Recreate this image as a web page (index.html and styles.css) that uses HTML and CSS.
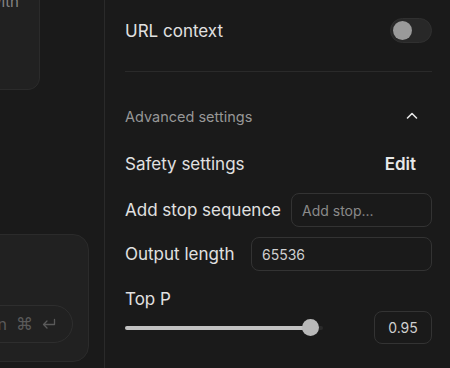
FILE: index.html
```html
<!DOCTYPE html>
<html lang="en">
<head>
  <meta charset="UTF-8" />
  <title>Run settings</title>
  <link rel="stylesheet" href="styles.css">
</head>
<body>

<div class="layout">
  <!-- Chat area (cropped) -->
  <div class="chat">
    <div class="card card-top">
      <div class="card-text">Start typing a prompt, or chat with</div>
    </div>
    <div class="spacer"></div>
    <div class="card card-input">
      <div class="run-pill">
        <span>Run</span>
        <span class="kbd">⌘</span>
        <svg class="enter" width="14" height="12" viewBox="0 0 14 12">
          <path d="M12.5 1.5 V6.5 H1.5 M5 3 L1.5 6.5 L5 10" fill="none" stroke="#5a5a5a" stroke-width="1.3" stroke-linecap="round" stroke-linejoin="round"/>
        </svg>
      </div>
    </div>
  </div>

  <div class="vline"></div>

  <!-- Run settings -->
  <div class="settings">
    <div class="row toggle-row">
      <span class="label">URL context</span>
      <label class="toggle">
        <input type="checkbox">
        <span class="slider"></span>
      </label>
    </div>

    <div class="divider"></div>

    <div class="row adv-header">
      <span class="adv-title">Advanced settings</span>
      <svg class="chevron" width="14" height="14" viewBox="0 0 14 14">
        <path d="M2.5 9 L7 4.5 L11.5 9" fill="none" stroke="#e6e6e6" stroke-width="1.6" stroke-linecap="round" stroke-linejoin="round"/>
      </svg>
    </div>

    <div class="row safety-row">
      <span class="label">Safety settings</span>
      <button class="edit-btn">Edit</button>
    </div>

    <div class="row field-row stop-row">
      <span class="label">Add stop sequence</span>
      <input class="field" type="text" placeholder="Add stop...">
    </div>

    <div class="row field-row output-row">
      <span class="label">Output length</span>
      <input class="field" type="text" value="65536">
    </div>

    <div class="topp-label label">Top P</div>
    <div class="row range-row">
      <div class="range">
        <div class="range-fill" style="width: 93.5%"></div>
        <div class="range-thumb" style="left: 93.5%"></div>
      </div>
      <input class="num-box" type="text" value="0.95">
    </div>
  </div>
</div>

</body>
</html>
```

FILE: styles.css
```css
* { box-sizing: border-box; font-family: 'Inter', 'Noto Sans', sans-serif; }
body {
  margin: 0;
  background: #1a1a1a;
  color: #e3e3e3;
  overflow: hidden;
}

.layout {
  display: flex;
  height: 368px;
}

/* Chat column, cut off by the window */
.chat {
  width: 104px;
  flex-shrink: 0;
  overflow: hidden;
  display: flex;
  flex-direction: column;
}

.card {
  background: #212121;
  border: 1px solid #2b2b2b;
  flex-shrink: 0;
}

.card-top {
  width: 400px;
  height: 150px;
  margin: -60px 0 0 -360px;
  border-radius: 12px;
  padding: 0 20px 77px;
  display: flex;
  align-items: flex-end;
}

.card-text {
  width: 100%;
  text-align: right;
  white-space: nowrap;
  font-size: 15px;
  line-height: 20px;
  color: #858585;
}

.spacer { height: 144px; flex-shrink: 0; }

.card-input {
  width: 289px;
  height: 128px;
  margin-left: -200px;
  border-radius: 16px;
  padding: 0 15px 18px 0;
  display: flex;
  align-items: flex-end;
  justify-content: flex-end;
}

.run-pill {
  height: 38px;
  padding: 0 16px 0 30px;
  border: 1px solid #2e2e2e;
  border-radius: 19px;
  display: flex;
  align-items: center;
  color: #5a5a5a;
  font-size: 16px;
}

.kbd {
  font-family: 'DejaVu Sans', sans-serif;
  font-size: 17px;
  margin-left: 9px;
}

.enter { margin-left: 9px; }

.vline {
  width: 1px;
  background: #2a2a2a;
  flex-shrink: 0;
}

/* Settings column */
.settings {
  flex: 1;
  padding: 18px 19px 0 20px;
  display: flex;
  flex-direction: column;
}

.row {
  display: flex;
  align-items: center;
  justify-content: space-between;
}

.label {
  font-size: 17px;
  color: #e1e1e1;
  white-space: nowrap;
}

.toggle-row { height: 25px; }

.toggle {
  position: relative;
  width: 42px;
  height: 25px;
}

.toggle input {
  opacity: 0;
  width: 0;
  height: 0;
}

.slider {
  position: absolute;
  top: 0; left: 0; right: 0; bottom: 0;
  background: #282828;
  border: 1px solid #303030;
  border-radius: 13px;
}

.slider:before {
  position: absolute;
  content: "";
  width: 19px;
  height: 19px;
  left: 2px;
  top: 2px;
  background: #9a9a9a;
  border-radius: 50%;
}

.divider {
  margin-top: 28px;
  height: 1px;
  background: #2a2a2a;
}

.adv-header {
  height: 20px;
  margin-top: 34px;
}

.adv-title {
  font-size: 14.5px;
  color: #979797;
}

.chevron { margin-right: 13px; }

.safety-row {
  height: 24px;
  margin-top: 26px;
}

.edit-btn {
  background: none;
  border: none;
  padding: 0;
  margin-right: 16px;
  color: #e8e8e8;
  font-size: 17px;
  font-weight: 600;
  cursor: pointer;
}

.field-row {
  height: 34px;
  gap: 10px;
}

.stop-row { margin-top: 17px; }
.output-row { margin-top: 10px; }

.field {
  height: 34px;
  background: transparent;
  border: 1px solid #333;
  border-radius: 8px;
  padding: 0 10px;
  color: #cfcfcf;
  font-size: 14px;
  outline: none;
}

.field::placeholder { color: #8a8a8a; }

.output-row .field { width: 181px; }
.stop-row .field { width: 141px; }

.topp-label {
  margin-top: 18px;
  line-height: 20px;
}

.range-row {
  height: 33px;
  margin-top: 2px;
}

.range {
  position: relative;
  width: 198px;
  height: 4px;
  background: #2a2a2a;
  border-radius: 2px;
}

.range-fill {
  height: 100%;
  background: #c2c2c2;
  border-radius: 2px;
}

.range-thumb {
  position: absolute;
  top: 50%;
  width: 17px;
  height: 17px;
  margin: -8.5px 0 0 -8.5px;
  background: #b9b9b9;
  border-radius: 50%;
}

.num-box {
  width: 58px;
  height: 33px;
  background: transparent;
  border: 1px solid #333;
  border-radius: 8px;
  color: #cfcfcf;
  font-size: 14px;
  text-align: center;
  outline: none;
}
```
